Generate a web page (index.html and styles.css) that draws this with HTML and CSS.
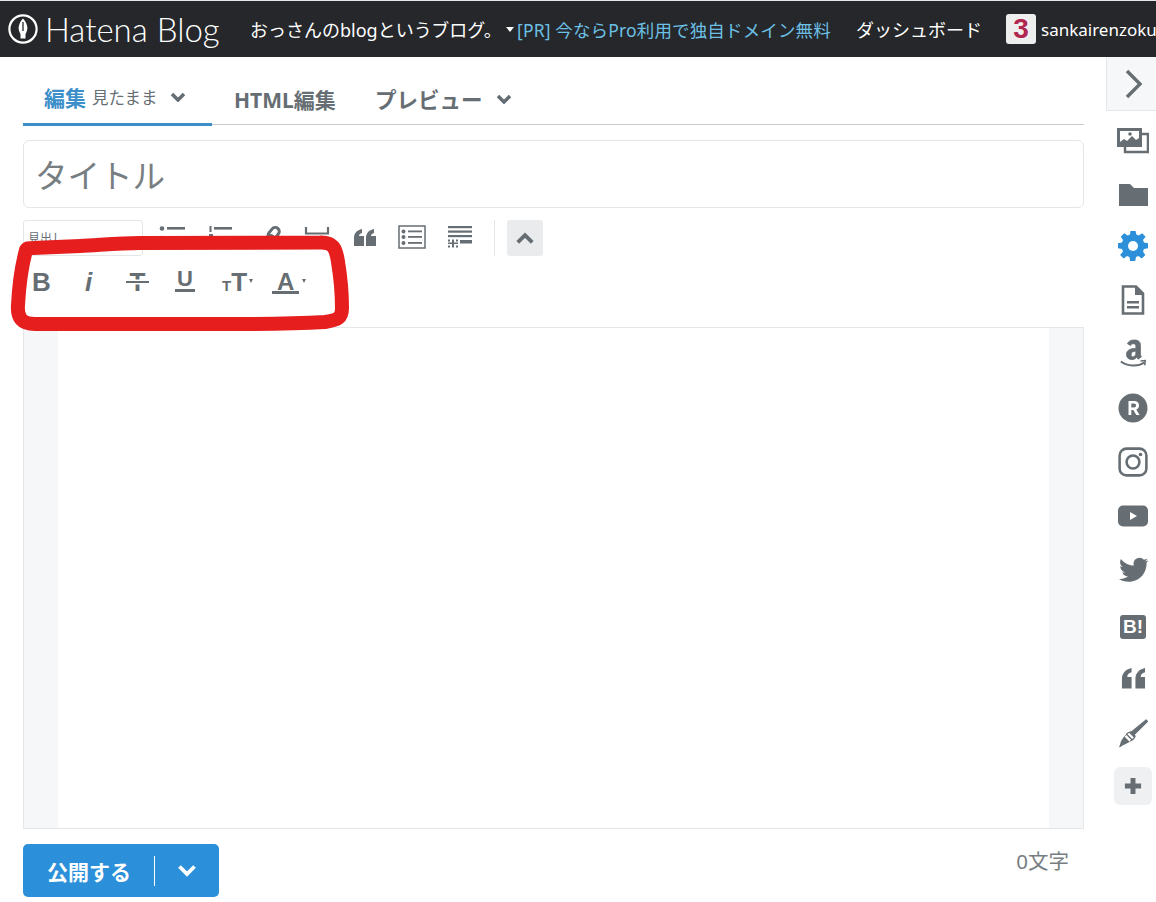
FILE: index.html
```html
<!DOCTYPE html>
<html lang="ja">
<head>
<meta charset="utf-8">
<title>Hatena Blog</title>
<link rel="stylesheet" href="styles.css">
</head>
<body>
<header class="topbar">
  <div class="brand">
    <svg class="brand-mark" viewBox="0 0 32 32"><circle cx="16" cy="16" r="13.6" fill="none" stroke="#fff" stroke-width="2.2"/><path d="M16 5.5c2.8 3 4.4 6.4 4.4 9.5 0 2.400-1 4.500-1.900 6.200v4.300h-5v-4.300c-.9-1.700-1.900-3.800-1.900-6.200 0-3.100 1.600-6.500 4.400-9.500z" fill="#fff"/><path d="M16 9v9" stroke="#25272a" stroke-width="1.300"/></svg>
    <span class="brand-name">Hatena Blog</span>
  </div>
  <div class="blog-name">おっさんのblogというブログ。</div>
  <span class="caret"></span>
  <a class="promo">[PR] 今ならPro利用で独自ドメイン無料</a>
  <a class="dash">ダッシュボード</a>
  <span class="avatar">3</span>
  <span class="user">sankairenzoku</span>
</header>

<div class="workspace">
  <main class="editor">
    <nav class="tabs">
      <div class="tab tab-active"><b class="tab-main">編集</b><span class="tab-sub">見たまま</span>
        <svg class="chev" viewBox="0 0 16 10"><path d="M2 2l6 6 6-6" fill="none" stroke="#666e73" stroke-width="3.500"/></svg></div>
      <div class="tab tab-html"><b>HTML編集</b></div>
      <div class="tab tab-preview"><b>プレビュー</b>
        <svg class="chev" viewBox="0 0 16 10"><path d="M2 2l6 6 6-6" fill="none" stroke="#666e73" stroke-width="3.500"/></svg></div>
    </nav>

    <div class="title-box">タイトル</div>

    <div class="tools tools-one">
      <div class="heading-select">見出し</div>
      <svg class="ic ic-list" viewBox="0 0 26 24"><g fill="#666e73"><circle cx="3" cy="3.500" r="2.300"/><rect x="8" y="2" width="18" height="2.600"/><circle cx="3" cy="13" r="2.300"/><rect x="8" y="11" width="18" height="2.600"/></g></svg>
      <svg class="ic ic-num" viewBox="0 0 26 24"><g fill="#666e73"><rect x="1.500" y="1" width="2" height="6"/><rect x="6" y="2" width="18" height="2.600"/><rect x="1" y="9" width="4" height="5"/><rect x="6" y="11" width="18" height="2.600"/></g></svg>
      <svg class="ic ic-link" viewBox="0 0 20 24"><g fill="none" stroke="#666e73" stroke-width="3"><rect x="8" y="2" width="8" height="13" rx="4" transform="rotate(40 12 8)"/><rect x="3" y="10" width="8" height="13" rx="4" transform="rotate(40 7 16)"/></g></svg>
      <svg class="ic ic-more" viewBox="0 0 26 24"><path d="M2 2v6.500h22V2M2 24v-6h22v6" fill="none" stroke="#666e73" stroke-width="2.200"/></svg>
      <svg class="ic ic-quote" viewBox="0 0 24 24"><path d="M1 21v-8c0-5 3-8 8-9v4c-2 .5-3 1.500-3 3h5v10zM13 21v-8c0-5 3-8 8-9v4c-2 .5-3 1.500-3 3h5v10z" fill="#666e73"/></svg>
      <svg class="ic ic-toc" viewBox="0 0 28 24"><rect x="1" y="1" width="26" height="22" fill="none" stroke="#666e73" stroke-width="1.500"/><g fill="#666e73"><circle cx="5.500" cy="6.500" r="2"/><circle cx="5.500" cy="12" r="2"/><circle cx="5.500" cy="18" r="2"/><rect x="10" y="5.500" width="14" height="1.800"/><rect x="10" y="11" width="14" height="1.800"/><rect x="10" y="17" width="14" height="1.800"/></g></svg>
      <svg class="ic ic-note" viewBox="0 0 26 24"><g fill="#666e73"><rect x="1" y="1" width="24" height="2.200"/><rect x="1" y="5.500" width="24" height="2.200"/><rect x="1" y="10" width="24" height="2.200"/><rect x="13" y="15" width="12" height="3.500"/><path d="M1 14.500h2v2H1zM5 14.500h2v2H5zM9 14.500h2v2H9zM1 17.500h10v1.500H1zM5 14.500h2v8H5zM1 20.500h2v2H1zM9 20.500h2v2H9z"/></g></svg>
      <span class="tool-sep"></span>
      <span class="collapse"><svg viewBox="0 0 18 12"><path d="M2.500 10L9 3.500 15.500 10" fill="none" stroke="#666e73" stroke-width="3.500"/></svg></span>
    </div>

    <div class="tools tools-two">
      <span class="fmt fmt-b">B</span>
      <span class="fmt fmt-i">i</span>
      <span class="fmt fmt-s">T</span>
      <span class="fmt fmt-u">U</span>
      <span class="fmt fmt-size"><small>T</small>T<i class="mini"></i></span>
      <span class="fmt fmt-color">A<i class="mini"></i></span>
    </div>

    <div class="canvas"><div class="gutter"></div><div class="page"></div><div class="gutter"></div></div>

    <footer class="bottom">
      <div class="publish"><span class="publish-label">公開する</span><span class="publish-sep"></span>
        <svg class="publish-chev" viewBox="0 0 20 13"><path d="M2.500 2.500L10 10l7.500-7.500" fill="none" stroke="#fff" stroke-width="3.800"/></svg></div>
      <div class="count">0文字</div>
    </footer>
  </main>

  <aside class="side">
    <div class="side-toggle"><svg viewBox="0 0 20 30"><path d="M3 2l13 13L3 28" fill="none" stroke="#666e73" stroke-width="3.400"/></svg></div>
    <div class="side-item side-image"><svg viewBox="0 0 32 26"><path d="M0 1h25v19H0z" fill="#666e73"/><path d="M25 7h6v18H8v-5" fill="none" stroke="#666e73" stroke-width="2.500"/><path d="M3 4h19v7l-3 2-4-4-5 5-3-2-4 3z" fill="#fff"/><circle cx="13" cy="7" r="1.800" fill="#666e73"/></svg></div>
    <div class="side-item side-folder"><svg viewBox="0 0 30 22"><path d="M1 0h11l4 4h14v18H1z" fill="#666e73"/></svg></div>
    <div class="side-item"><svg viewBox="0 0 30 30"><path d="M12.500 1h5l.8 4 2.400 1 3.400-2.300 3.500 3.500L25 10.600l1 2.400 4 .8v5l-4 .8-1 2.400 2.300 3.400-3.500 3.500-3.400-2.300-2.400 1-.8 4h-5l-.8-4-2.400-1-3.400 2.300-3.500-3.500L5 22l-1-2.400-4-.8v-5l4-.8 1-2.400-2.300-3.400 3.500-3.500 3.400 2.300 2.400-1z" transform="translate(0 -1.500)" fill="#2b90d9"/><circle cx="15" cy="15" r="5" fill="#fff"/></svg></div>
    <div class="side-item"><svg viewBox="0 0 24 30"><path d="M2 1.500h13l7 7v20H2z" fill="none" stroke="#666e73" stroke-width="2.600"/><path d="M14 1v9h8z" fill="#666e73"/><path d="M6 16h12v2.500H6zM6 21h12v2.500H6z" fill="#666e73"/></svg></div>
    <div class="side-item"><svg viewBox="0 0 30 32"><path d="M9 5c1-2 3-4 7-4 5 0 7 2 7 6v9c0 1 .3 2 1 3l-3.500 2.500c-.7-.7-1.200-1.500-1.500-2-1.500 1.800-3 2.500-5 2.500-3.500 0-6-2-6-5.500 0-4.500 4-6.500 10-6.500V8c0-2-1-3-2.500-3-1.500 0-2.500.8-3 2zM18 13c-3 0-5 1-5 3.500 0 1.500.8 2.500 2 2.500 2 0 3-2 3-4z" fill="#666e73" stroke="#666e73" stroke-width=".8"/><path d="M2 24c7 5 18 6 25 1" fill="none" stroke="#666e73" stroke-width="2"/><path d="M23 23.500l5-.5-.5 5" fill="none" stroke="#666e73" stroke-width="1.700"/></svg></div>
    <div class="side-item"><svg viewBox="0 0 30 30"><circle cx="15" cy="15" r="14.500" fill="#666e73"/><path d="M10.500 8h5.500c3.200 0 5 1.600 5 4.400 0 2.100-1.100 3.500-2.800 4.100l3.400 5.500h-3.300l-3-5.100h-2v5.100h-2.800zM13.300 10.500v4h2.500c1.500 0 2.300-.7 2.300-2s-.8-2-2.300-2z" fill="#fff"/></svg></div>
    <div class="side-item"><svg viewBox="0 0 28 28"><rect x="1.500" y="1.500" width="25" height="25" rx="6.500" fill="none" stroke="#666e73" stroke-width="2.400"/><circle cx="14" cy="14" r="6" fill="none" stroke="#666e73" stroke-width="2.400"/><circle cx="21" cy="7" r="1.700" fill="#666e73"/></svg></div>
    <div class="side-item"><svg viewBox="0 0 30 21"><rect width="30" height="21" rx="5" fill="#666e73"/><path d="M12 6.500l7 4-7 4z" fill="#fff"/></svg></div>
    <div class="side-item"><svg viewBox="0 0 30 25"><path d="M30 3c-1 .5-2 .7-3 .9 1-.7 2-1.700 2.400-2.900-1 .6-2.200 1-3.400 1.300A6 6 0 0 0 15.800 8C10.600 7.800 6 5.300 3 1.400c-1.700 2.800-.8 6.300 1.800 8-.9 0-1.800-.3-2.600-.7 0 2.900 2 5.400 4.800 6-.9.200-1.800.3-2.700.1.800 2.400 3 4.100 5.600 4.200C7.400 20.800 4 21.800 1 21.400 3.800 23.200 7 24.200 10.500 24.200c12 0 18.500-10 18-19 1-.6 1-1.300 1.500-2.200z" fill="#666e73"/></svg></div>
    <div class="side-item side-hatena"><span class="hatena-b">B!</span></div>
    <div class="side-item side-quote"><svg viewBox="0 0 26 22"><path d="M1 22v-10c0-6 3.500-10 10-11.500v4.500c-3 1-4.500 2.500-4.500 5H11v12zM15 22v-10c0-6 3.500-10 10-11.500v4.500c-3 1-4.500 2.500-4.500 5H25v12z" fill="#666e73"/></svg></div>
    <div class="side-item side-brush"><svg viewBox="0 0 32 32"><path d="M30 1l1.500 1.500L17 17l-3-3z" fill="#666e73" stroke="#666e73" stroke-width="1.200" stroke-linejoin="round"/><path d="M14 13l5 5c-1 3-3 5-6 6-3 2-6 3-11 6-1 0-1-1 0-2 1-5 3-8 6-11 2-3 3-3.500 6-4z" fill="#666e73"/><path d="M8 18l5 5M11 15.500l5 5" stroke="#fff" stroke-width="2.500"/></svg></div>
    <div class="side-item"><span class="side-plus"><svg viewBox="0 0 20 20"><path d="M10 1v18M1 10h18" stroke="#666e73" stroke-width="5.500"/></svg></span></div>
  </aside>
</div>

<svg class="annotation" viewBox="0 0 1156 902"><path d="M26 250C27 248 28 248 33 248L80 246C100 245 120 243 140 243L320 242.500C333 242 336 248 338 262C341 280 342 295 342 308C342 318 338 320 325 322C290 324 260 324 235 324L35 324C22 324 17 318 18 305C19 285 22 265 26 250Z" fill="none" stroke="#e61e1e" stroke-width="14" stroke-linejoin="round"/></svg>
</body>
</html>
```

FILE: styles.css
```css
* { box-sizing: border-box; }
html, body { margin: 0; padding: 0; }
body {
  position: relative;
  width: 1156px;
  height: 902px;
  overflow: hidden;
  background: #fff;
  color: #666e73;
  font-family: "Noto Sans", "Noto Sans CJK JP", sans-serif;
}

.topbar {
  height: 57px;
  border-top: 1px solid #e6e6e6;
  background: #25272a;
  color: #fff;
  display: flex;
  align-items: center;
  white-space: nowrap;
  font-size: 17.500px;
}
.brand { display: flex; align-items: center; width: 250px; padding-left: 7px; flex: none; }
.brand-mark { width: 32px; height: 32px; flex: none; }
.brand-name { font-family: "Lato", sans-serif; font-weight: 300; font-size: 33px; margin-left: 6px; line-height: 1; }
.blog-name { width: 255px; flex: none; font-size: 18px; }
.caret { width: 0; height: 0; flex: none; margin: 0 3px 0 1px; border: 4px solid transparent; border-top: 5px solid #fff; border-bottom: 0; }
.promo { width: 339px; flex: none; color: #6cc0e5; letter-spacing: .15px; }
.dash { width: 150px; flex: none; font-size: 18px; }
.avatar {
  width: 30px; height: 30px; flex: none;
  border-radius: 3px;
  background: #eeeeee;
  color: #b1264f;
  font: bold 28px/30px "Liberation Sans", sans-serif;
  text-align: center;
}
.user { margin-left: 5px; font-size: 17px; }

.workspace { display: flex; height: 845px; }
.editor { width: 1106px; flex: none; padding: 0 22px 0 23px; }

.tabs { display: flex; height: 68px; border-bottom: 1px solid #c8cbcd; }
.tab { display: flex; align-items: center; height: 69px; padding-top: 14px; }
.tab-active { width: 189px; padding-left: 21px; border-bottom: 3px solid #3c8fc9; }
.tab-main { color: #3c8fc9; font-size: 21px; }
.tab-sub { margin-left: 6px; font-size: 16.500px; color: #666e73; }
.chev { width: 16px; height: 10px; margin-left: 12px; }
.tab-html { margin-left: 22px; font-size: 21px; width: 141px; }
.tab-preview { font-size: 21.500px; }
.tab-preview .chev { margin-left: 13px; }

.title-box {
  height: 68px;
  margin-top: 15px;
  padding-left: 11px;
  border: 1px solid #e5e6e7;
  border-radius: 6px;
  font-size: 32.500px;
  line-height: 69px;
  color: #777e82;
}

.tools { display: flex; align-items: center; }
.tools-one { height: 36px; margin-top: 12px; align-items: flex-start; }
.heading-select {
  width: 120px; height: 36px;
  padding: 8px 0 0 4px;
  border: 1px solid #e5e6e7;
  border-radius: 3px;
  font-size: 12px;
}
.ic { display: block; flex: none; margin-top: 5px; height: 24px; }
.ic-list { width: 26px; margin-left: 16px; }
.ic-num { width: 26px; margin-left: 23px; }
.ic-link { width: 20px; margin-left: 28px; }
.ic-more { width: 26px; margin-left: 22px; }
.ic-quote { width: 24px; margin-left: 23px; }
.ic-toc { width: 28px; margin-left: 21px; height: 24px; }
.ic-note { width: 26px; margin-left: 21px; }
.tool-sep { width: 1px; height: 36px; margin-left: 21px; background: #e5e6e7; }
.collapse { width: 36px; height: 36px; margin-left: 12px; border-radius: 3px; background: #e9ebed; display: flex; align-items: center; justify-content: center; }
.collapse svg { width: 20px; height: 14px; }

.tools-two { height: 71px; align-items: flex-start; font-family: "Liberation Sans", sans-serif; font-weight: bold; }
.fmt { display: block; color: #666e73; font-size: 26px; line-height: 30px; margin-top: 11px; position: relative; }
.fmt-b { margin-left: 9px; width: 19px; }
.fmt-i { margin-left: 34px; width: 10px; font-style: italic; }
.fmt-s { margin-left: 31px; width: 23px; text-align: center; }
.fmt-s::after { content: ""; position: absolute; left: 0; right: 0; top: 14px; height: 2px; background: #666e73; box-shadow: 0 0 0 1.500px #fff; }
.fmt-u { margin-left: 26px; width: 20px; text-align: center; font-size: 22px; line-height: 24px; }
.fmt-u::after { content: ""; position: absolute; left: 0; right: 0; top: 22px; height: 3px; background: #666e73; }
.fmt-size { margin-left: 27px; width: 32px; }
.fmt-size small { font-size: 15px; }
.fmt-size .mini { top: 12px; right: 1px; }
.fmt-color { margin-left: 18px; width: 34px; font-size: 24px; padding-left: 5px; }
.fmt-color::after { content: ""; position: absolute; left: 0; width: 27px; top: 24px; height: 3px; background: #666e73; }
.mini { position: absolute; top: 12px; right: 0; width: 0; height: 0; border: 2.500px solid transparent; border-top: 4px solid #666e73; border-bottom: 0; }

.canvas { display: flex; height: 502px; border: 1px solid #e5e6e7; }
.gutter { width: 34px; background: #f6f7f8; flex: none; }
.page { flex: 1; background: #fff; }

.bottom { display: flex; justify-content: space-between; align-items: flex-start; margin-top: 15px; }
.publish {
  display: flex; align-items: center;
  width: 196px; height: 53px;
  border-radius: 5px;
  background: #2b90d9;
  color: #fff;
}
.publish-label { margin-left: 24px; font-size: 21px; font-weight: bold; }
.publish-sep { width: 1px; height: 30px; margin-left: 23px; background: #fff; }
.publish-chev { width: 20px; height: 13px; margin-left: 22px; }
.count { margin: 1px 15px 0 0; font-size: 20.500px; color: #777e82; }

.side { width: 50px; flex: none; }
.side-toggle {
  height: 54px;
  background: #f6f7f8;
  border-left: 1px solid #e5e6e7;
  border-bottom: 1px solid #e5e6e7;
  display: flex; align-items: center; justify-content: center;
  padding-left: 4px;
}
.side-toggle svg { width: 20px; height: 30px; }
.side-item { height: 54px; display: flex; align-items: center; justify-content: center; padding-left: 4px; }
.side-item svg { width: 30px; height: 30px; }
.side-image { padding-top: 4px; }
.side-image svg { width: 32px; }
.side-folder { padding-top: 6px; }
.side-quote svg { width: 25px; }
.side-brush { padding-top: 3px; }
.side-hatena { padding-top: 6px; }
.hatena-b {
  width: 26px; height: 24px;
  border-radius: 3px;
  background: #666e73;
  color: #fff;
  font: bold 19px/24px "Liberation Sans", sans-serif;
  text-align: center;
}
.side-plus { width: 38px; height: 38px; border-radius: 6px; background: #eff0f2; display: flex; align-items: center; justify-content: center; }
.side-plus svg { width: 18px; height: 18px; }

.annotation { position: absolute; left: 0; top: 0; width: 1156px; height: 902px; pointer-events: none; }
```
